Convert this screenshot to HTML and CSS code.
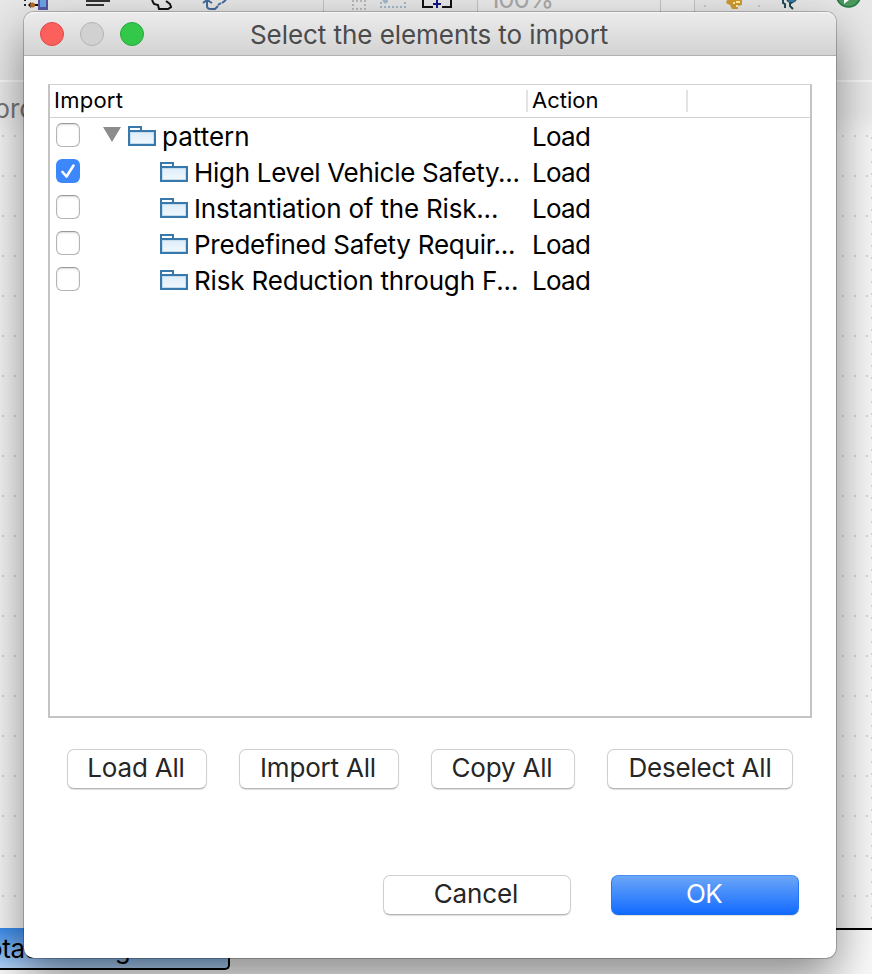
FILE: index.html
```
<!DOCTYPE html>
<html lang="en"><head><meta charset="utf-8"><title>Select the elements to import</title><link rel="stylesheet" href="styles.css"></head>
<body>
<div class="editor">
  <div class="toolbar">
    <svg class="tools" width="872" height="12" viewBox="0 0 872 12">
      <path d="M24 0h2v1h-2zM24 4h2v2h-2z" fill="#222"/><path d="M28 5l3-3v2h7v2h-7v2z" fill="#111"/><circle cx="32.500" cy="5" r="2.500" fill="#b46b1e"/><path d="M38 0h10v10H38z" fill="#5555a5"/><path d="M40 0h6v7h-6z" fill="#6aa5e2"/>
      <path d="M86 0h24v2H86zM86 4h18v2H86z" fill="#333"/>
      <path d="M152 0l2 4 4 1 1 4h9l3-2-1-3-4-3" fill="none" stroke="#111" stroke-width="2"/>
      <path d="M203 3l4-3 5 3M207 1v5q0 3 4 3h4l3-3M218 5l3-2M222 3l4-3" fill="none" stroke="#426c9c" stroke-width="2"/>
      <rect x="479" y="0" width="215" height="12" fill="#ececec"/><path d="M323.500 0v12M477.500 0v12M660.500 0v12M694.500 0v12" stroke="#c4c4c4"/>
      <path d="M352 1h14M352 5h2M364 5h2M352 9h14" stroke="#bbb" stroke-width="2" stroke-dasharray="2 2"/>
      <path d="M380 7h26M380 3h2M404 3h2" stroke="#a4b8cc" stroke-width="2" stroke-dasharray="2 2"/><path d="M382 0h6v2l-3 2z" fill="#a4b8cc"/>
      <path d="M423 0v7h10M442 7h9V0" fill="none" stroke="#111" stroke-width="2"/><path d="M436 0h2v3h3v2h-3v3h-2V5h-3V3h3z" fill="#141487"/>
      <path d="M727 0h15v5l-4 1v3h-6l-2-4-4-2z" fill="#d19a32"/><path d="M733 3h2M736 2h4M736 6h2" fill="none" stroke="#fff0a6" stroke-width="2"/><circle cx="705" cy="6" r="1" fill="#c9bcb4"/><circle cx="759" cy="6" r="1" fill="#c9bcb4"/>
      <path d="M783 0v3l2 1v4M787 0l4 3 5-3M790 2v4l3 3" fill="none" stroke="#214b55" stroke-width="2"/><path d="M788 0h8l-3 2h-4z" fill="#377ca9"/>
      <circle cx="848.500" cy="-5" r="12" fill="#4a995c" stroke="#1c7840" stroke-width="1.500"/><path d="M844 0h5l-5 4z" fill="#fff"/>
    </svg>
    <span class="zoomlevel">100%</span>
  </div>
  <div class="tabs"><span>proc</span></div>
  <div class="canvas"></div>
  <div class="node-area"><div class="node"><span>otation Diagram</span></div></div>
</div>
<main class="dialog">
  <header class="titlebar"><i class="light close"></i><i class="light minimize"></i><i class="light grow"></i><h1>Select the elements to import</h1></header>
  <section class="tree">
    <div class="head"><div class="c1"><span>Import</span></div><div class="c2"><span>Action</span></div><div class="c3"></div></div>
    <div class="row root"><i class="check"></i><svg class="arrow" width="18" height="15" viewBox="0 0 18 15"><path d="M0 0h18L9 15z" fill="#8c8c8c"/></svg><svg class="folder" width="28" height="20" viewBox="0 0 28 20"><use href="#folder"/></svg><span class="name n0">pattern</span><span class="action">Load</span></div>
    <div class="row"><i class="check on"><svg width="24" height="24" viewBox="0 0 24 24"><path d="M6.500 13l4 4.500L17.500 6.500" fill="none" stroke="#fff" stroke-width="2.600" stroke-linecap="round" stroke-linejoin="round"/></svg></i><svg class="folder" width="28" height="20" viewBox="0 0 28 20"><use href="#folder"/></svg><span class="name n1">High Level Vehicle Safety...</span><span class="action">Load</span></div>
    <div class="row"><i class="check"></i><svg class="folder" width="28" height="20" viewBox="0 0 28 20"><use href="#folder"/></svg><span class="name n2">Instantiation of the Risk...</span><span class="action">Load</span></div>
    <div class="row"><i class="check"></i><svg class="folder" width="28" height="20" viewBox="0 0 28 20"><use href="#folder"/></svg><span class="name n3">Predefined Safety Requir...</span><span class="action">Load</span></div>
    <div class="row"><i class="check"></i><svg class="folder" width="28" height="20" viewBox="0 0 28 20"><use href="#folder"/></svg><span class="name n4">Risk Reduction through F...</span><span class="action">Load</span></div>
  </section>
  <div class="bulk"><button class="b1">Load All</button><button class="b2">Import All</button><button class="b3">Copy All</button><button class="b4">Deselect All</button></div>
  <footer class="confirm"><button>Cancel</button><button class="primary">OK</button></footer>
</main>
<svg class="defs" width="0" height="0"><defs><linearGradient id="paper" x2="0" y2="1"><stop stop-color="#dcecf9"/><stop offset="1" stop-color="#f3f9fe"/></linearGradient><g id="folder"><path d="M1 5V1h12v4" fill="#fff" stroke="#3978ab" stroke-width="2"/><rect x="1" y="5" width="26" height="14" fill="url(#paper)" stroke="#3978ab" stroke-width="2"/><rect x="2.500" y="6.500" width="23" height="11" fill="none" stroke="#c3dcef"/></g></defs></svg>
</body></html>
```
FILE: styles.css
```
* { box-sizing: border-box; }
body { margin: 0; width: 872px; height: 974px; overflow: hidden; position: relative; font-family: Inter, "Liberation Sans", sans-serif; font-size: 26px; color: #000; }
.editor { width: 872px; height: 974px; display: flex; flex-direction: column; overflow: hidden; }
.toolbar { height: 82px; flex: none; background: #e8e8e8; border-bottom: 2px solid #fafafa; position: relative; overflow: hidden; }
.tools { display: block; }
.zoomlevel { position: absolute; left: 489px; top: -16px; line-height: 30px; font-size: 26px; letter-spacing: -1.3px; color: #aaa; }
.tabs { height: 53px; flex: none; background: linear-gradient(#ececec 60%, #f7f7f7); color: #777; line-height: 54px; }
.tabs span { margin-left: -6px; font-size: 26px; }
.canvas { flex: 1; background: conic-gradient(from 270deg at 2px 2px, #d6d6d6 90deg, transparent 0) 2px 0 / 12px 40px, conic-gradient(from 270deg at 2px 2px, #d6d6d6 90deg, transparent 0) 871px 2px / 872px 12px repeat-y, #f7f7f7; }
.node-area { height: 46px; flex: none; background: #fafafa; border-top: 2px solid #000; }
.node { margin-top: -2px; width: 230px; height: 42px; background: linear-gradient(#3a8cec, #b4d3f8); border: solid #000; border-width: 0 2px 2px 0; border-radius: 0 0 5px 0; line-height: 41px; overflow: hidden; }
.node span { margin-left: -13px; letter-spacing: -.35px; }
.dialog { position: absolute; left: 24px; top: 12px; width: 812px; height: 946px; background: #fff; border-radius: 10px; box-shadow: 0 0 0 1px rgba(0,0,0,.22), 0 20px 48px rgba(0,0,0,.46); }
.titlebar { height: 44px; border-radius: 10px 10px 0 0; background: linear-gradient(#ececec, #d3d3d3); border-bottom: 1px solid #b1b1b1; display: flex; align-items: center; padding-left: 16px; box-shadow: inset 0 1px #f6f6f6; }
.light { width: 24px; height: 24px; border-radius: 50%; border: 1px solid; margin-right: 16px; }
.close { background: #fc605c; border-color: #df4744; }
.minimize { background: #d1d1d1; border-color: #b4b4b4; }
.grow { background: #34c84a; border-color: #25a938; }
h1 { margin: 3px 0 0 90px; font-size: 26px; font-weight: 400; line-height: 32px; letter-spacing: -.06px; color: #4b4b4b; white-space: nowrap; }
.tree { margin: 28px 24px 0; height: 634px; border: 2px solid #c4c4c4; border-top: 1px solid #d2d2d2; }
.head { height: 33px; border-bottom: 1px solid #d2d2d2; display: flex; align-items: center; font-size: 22px; line-height: 30px; }
.head div { height: 22px; border-right: 2px solid #e3e3e3; display: flex; align-items: center; }
.head span { margin-top: -2px; }
.c1 { width: 478px; padding-left: 4px; letter-spacing: .25px; }
.c2 { width: 160px; padding-left: 4px; }
.head .c3 { border: 0; }
.row { height: 36px; display: flex; align-items: center; padding-left: 6px; white-space: nowrap; }
.check { width: 24px; height: 24px; border: 1px solid #b5b5b5; border-top-color: #999; border-radius: 6px; box-shadow: inset 0 1px 2px rgba(0,0,0,.15); margin: -2px 80px 0 0; flex: none; }
.root .check { margin-right: 23px; }
.check.on { background: #3b87fb; border: 0; box-shadow: none; }
.check svg { display: block; }
.arrow { margin: -3px 7px 0 0; }
.folder { flex: none; margin-right: 6px; }
.name { width: 338px; line-height: 36px; padding-top: 2px; }
.root .name { width: 370px; }
.n1 { letter-spacing: -.29px; }
.n2 { letter-spacing: -.19px; }
.n3 { letter-spacing: -.24px; }
.n4 { letter-spacing: -.17px; }
.action { padding-top: 2px; line-height: 36px; letter-spacing: -.75px; }
button { height: 40px; font: 26px/36px Inter, "Liberation Sans", sans-serif; letter-spacing: -.2px; color: #262626; background: #fff; border: 1px solid #d0d0d0; border-bottom-color: #b5b5b5; border-radius: 7px; box-shadow: 0 1px 1px rgba(0,0,0,.13); padding: 0 2px 2px 0; white-space: nowrap; }
.bulk { display: flex; gap: 32px; padding: 31px 43px 0; }
.b1 { width: 140px; } .b2 { width: 160px; } .b3 { width: 144px; } .b4 { width: 186px; padding-right: 0; }
.confirm { display: flex; justify-content: flex-end; gap: 40px; padding: 86px 37px 0; }
.confirm button { width: 188px; letter-spacing: -.1px; }
.confirm .primary { color: #fff; letter-spacing: -.6px; background: linear-gradient(#6ba6f8, #126bff); border-color: #4a8ff5 #2878f5 #1468ee; }
.defs { position: absolute; }
```
